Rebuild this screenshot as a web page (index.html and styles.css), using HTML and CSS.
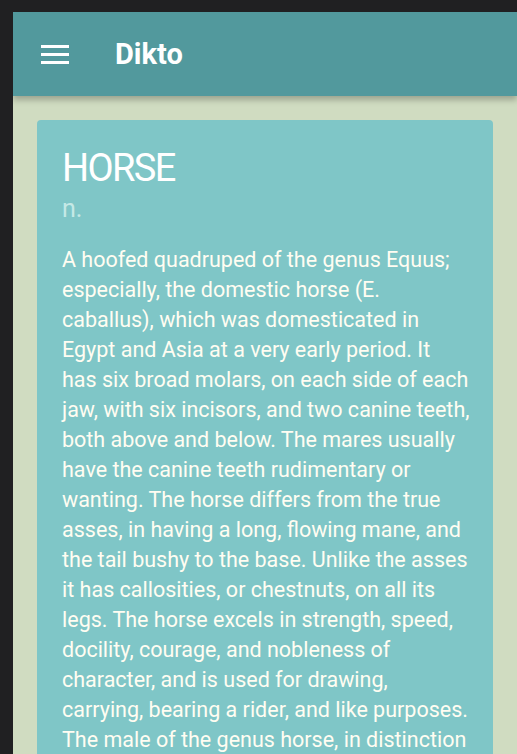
FILE: index.html
```html
<!DOCTYPE html>
<html lang="en">
<head>
<meta charset="utf-8">
<title>Dikto</title>
<link rel="stylesheet" href="styles.css">
</head>
<body>
<div class="app">
  <header class="topbar">
    <button class="menu-btn" aria-label="Menu">
      <svg width="28" height="20" viewBox="0 0 28 20"><rect x="0" y="0" width="28" height="3" fill="#fff"/><rect x="0" y="8" width="28" height="3" fill="#fff"/><rect x="0" y="16" width="28" height="3" fill="#fff"/></svg>
    </button>
    <h1 class="title">Dikto</h1>
  </header>
  <main class="content">
    <article class="card">
      <h2 class="word">HORSE</h2>
      <div class="pos">n.</div>
      <p class="definition">A hoofed quadruped of the genus Equus;<br>especially, the domestic horse (E.<br>caballus), which was domesticated in<br>Egypt and Asia at a very early period. It<br>has six broad molars, on each side of each<br>jaw, with six incisors, and two canine teeth,<br>both above and below. The mares usually<br>have the canine teeth rudimentary or<br>wanting. The horse differs from the true<br>asses, in having a long, flowing mane, and<br>the tail bushy to the base. Unlike the asses<br>it has callosities, or chestnuts, on all its<br>legs. The horse excels in strength, speed,<br>docility, courage, and nobleness of<br>character, and is used for drawing,<br>carrying, bearing a rider, and like purposes.<br>The male of the genus horse, in distinction<br>from the female or mare; usually, a<br>castrated male.</p>
    </article>
  </main>
</div>
</body>
</html>
```
FILE: styles.css
```css
html {
  background: #202022;
  height: 100%;
}
body {
  margin: 12px 0 0 13px;
  height: calc(100% - 12px);
  overflow: hidden;
  font-family: Roboto, "Liberation Sans", sans-serif;
}
.app {
  background: #d0dcc1;
  min-height: 100%;
}
.topbar {
  height: 84px;
  background: #52999d;
  display: flex;
  align-items: center;
  box-shadow: 0 4px 6px rgba(0,0,0,0.25);
  position: relative;
  z-index: 1;
}
.menu-btn {
  background: none;
  border: 0;
  padding: 0;
  margin-left: 28px;
  width: 28px;
  height: 20px;
  display: flex;
  margin-top: 2px;
}
.title {
  margin: 0 0 0 46px;
  color: #fff;
  font-size: 29px;
  font-weight: 700;
}
.content {
  padding: 24px 24px 0 24px;
}
.card {
  background: #7fc6c7;
  border-radius: 4px;
  padding: 26px 25px 20px 25px;
}
.word {
  margin: 0;
  font-size: 38px;
  font-weight: 400;
  letter-spacing: -1.6px;
  color: #fff;
  line-height: 44px;
}
.pos {
  font-size: 25px;
  color: #c5e9e6;
  line-height: 30px;
  margin-top: 4px;
}
.definition {
  margin: 21px 0 0 0;
  font-size: 21.5px;
  line-height: 30px;
  color: #fffdf2;
  white-space: nowrap;
}
```
